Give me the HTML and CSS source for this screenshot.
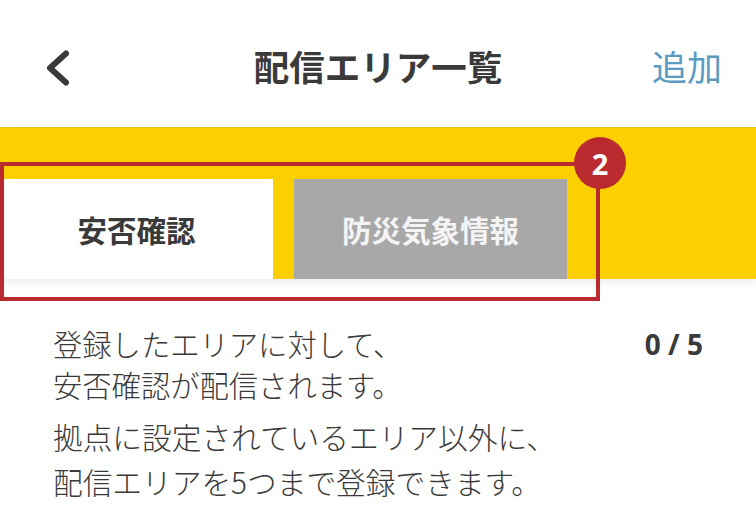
FILE: index.html
```html
<!DOCTYPE html>
<html lang="ja">
<head>
<meta charset="utf-8">
<title>配信エリア一覧</title>
<link rel="stylesheet" href="styles.css">
</head>
<body>
<header class="topbar">
  <svg class="back" viewBox="0 0 26 38" width="26" height="38" aria-hidden="true"><path d="M21 4.500 L5 19 L21 33.500" fill="none" stroke="#3a3a3a" stroke-width="6" stroke-linecap="round" stroke-linejoin="round"/></svg>
  <h1 class="title">配信エリア一覧</h1>
  <span class="add">追加</span>
</header>
<section class="band">
  <nav class="tabs">
    <div class="tab tab-on">安否確認</div>
    <div class="tab tab-off">防災気象情報</div>
  </nav>
  <div class="frame"></div>
  <div class="badge">2</div>
</section>
<main class="info">
  <div class="notes">
    <p class="note">登録したエリアに対して、<br>安否確認が配信されます。</p>
    <p class="note note-second">拠点に設定されているエリア以外に、<br>配信エリアを5つまで登録できます。</p>
  </div>
  <div class="count">0 / 5</div>
</main>
</body>
</html>
```
FILE: styles.css
```css
* { box-sizing: border-box; }
html, body { margin: 0; padding: 0; }
body {
  width: 756px;
  height: 528px;
  overflow: hidden;
  background: #fff;
  color: #3a3a3a;
  font-family: "Noto Sans CJK JP", "Noto Sans", sans-serif;
}
.topbar {
  height: 127px;
  display: grid;
  grid-template-columns: 1fr auto 1fr;
  align-items: center;
  padding: 8px 34px 0;
}
.back { display: block; margin-left: 11px; margin-top: 1px; }
.title {
  margin: -4px 0 0;
  font-size: 35.500px;
  line-height: 50px;
  font-weight: 700;
}
.add {
  justify-self: end;
  font-size: 35px;
  line-height: 50px;
  color: #5b9bbf;
  margin-top: -4px;
}
.band {
  height: 152px;
  background: #fcd000;
  border-top: 1px solid #e8c420;
  padding-top: 51px;
  position: relative;
  box-shadow: 0 3px 8px rgba(0, 0, 0, 0.08);
}
.tabs { display: flex; gap: 21px; }
.tab {
  width: 273px;
  height: 100px;
  display: flex;
  align-items: center;
  justify-content: center;
  font-size: 29.500px;
  font-weight: 700;
}
.tab-on { background: #fff; color: #3a3a3a; }
.tab-off { background: #a8a8a8; color: #f4f4f4; }
.frame {
  position: absolute;
  left: 0;
  top: 34px;
  width: 600px;
  height: 139px;
  border: 4px solid #b92b2e;
}
.badge {
  position: absolute;
  left: 574px;
  top: 9px;
  width: 52px;
  height: 52px;
  border-radius: 50%;
  background: #b92b2e;
  color: #fff;
  font-size: 29px;
  font-weight: 700;
  display: flex;
  align-items: center;
  justify-content: center;
  font-family: "Open Sans", "Noto Sans", sans-serif;
}
.info {
  display: flex;
  justify-content: space-between;
  padding: 44px 53px 0 53px;
}
.note {
  margin: 0;
  font-size: 29.300px;
  line-height: 41px;
  font-weight: 300;
}
.note-second { margin-top: 9px; font-size: 29.700px; line-height: 45px; }
.count {
  font-size: 28px;
  line-height: 41px;
  margin-top: 1px;
  font-weight: 700;
  font-family: "Noto Sans", sans-serif;
}
```
